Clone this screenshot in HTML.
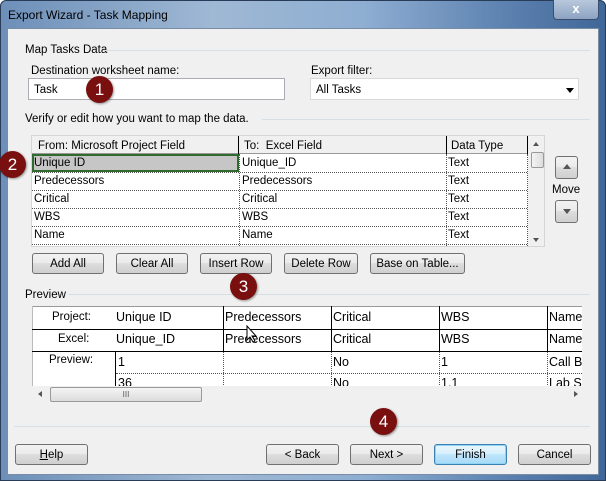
<!DOCTYPE html>
<html><head><style>
*{box-sizing:border-box;margin:0;padding:0}
body{width:606px;height:481px;overflow:hidden;font-family:"Liberation Sans",sans-serif;font-size:11.5px;color:#000;background:#fff}
.a{position:absolute}
.frame{left:0;top:0;width:606px;height:481px;background:linear-gradient(90deg,#6d8fb8 0%,#9fb8d4 35%,#8eaed2 60%,#5a7fae 85%,#3f6797 100%);border:1px solid #283c58;border-radius:6px 6px 0 0}
.client{left:7px;top:28px;width:592px;height:447px;background:#f0f0f0;border:1px solid #7a8da6}
.btn{position:absolute;height:21px;border:1px solid #707070;border-radius:3px;background:linear-gradient(#f2f2f2 0%,#ebebeb 45%,#dddddd 50%,#cfcfcf 100%);text-align:center;line-height:20px;font-size:11.5px}
.circ{position:absolute;width:27px;height:27px;border-radius:50%;background:#7a0f0f;color:#fff;font-size:17px;text-align:center;line-height:27px;box-shadow:1px 1px 2px rgba(0,0,0,.4)}
.grp{position:absolute;height:1px;background:#d5dfe5}
.cell{position:absolute;white-space:nowrap;overflow:hidden}
.hl{position:absolute;height:0;border-top:1px dotted #555}
.vl{position:absolute;width:0;border-left:1px dotted #555}
</style></head><body>
<div class="a frame"></div>
<div class="a" style="left:8px;top:8px;font-size:12px">Export Wizard - Task Mapping</div>
<div class="a" style="left:553px;top:0;width:46px;height:20px;border:1px solid #3a4f6d;border-top:none;border-radius:0 0 4px 4px;background:linear-gradient(#b8c8dc,#8ca3c2);color:#fff;text-align:center;font-weight:bold;font-size:13px;line-height:18px">x</div>
<div class="a client"></div>

<div class="a" style="left:25px;top:44px">Map Tasks Data</div>
<div class="grp" style="left:104px;top:50px;width:486px"></div>
<div class="a" style="left:31px;top:65px">Destination worksheet name:</div>
<div class="a" style="left:28px;top:78px;width:257px;height:22px;border:1px solid #abadb3;background:#fff;padding:5px 5px">Task</div>
<div class="a" style="left:311px;top:65px">Export filter:</div>
<div class="a" style="left:310px;top:78px;width:269px;height:22px;border:1px solid #d9d9d9;background:#fff;padding:5px 5px">All Tasks</div>
<div class="a" style="left:566px;top:88px;width:0;height:0;border-left:4px solid transparent;border-right:4px solid transparent;border-top:5px solid #000"></div>
<div class="a" style="left:25px;top:113px">Verify or edit how you want to map the data.</div>
<div class="grp" style="left:262px;top:119px;width:328px"></div>

<div class="a" style="left:31px;top:135px;width:514px;height:112px;background:#fff;border:1px solid #d5d5d5;overflow:hidden">
 <div class="cell" style="left:0;top:0;width:495px;height:18px;background:#f0f0f0;border-bottom:1px solid #999"></div>
 <div class="cell" style="left:6px;top:4px">From: Microsoft Project Field</div>
 <div class="cell" style="left:212px;top:4px">To:&nbsp; Excel Field</div>
 <div class="cell" style="left:419px;top:4px">Data Type</div>
 <div class="a" style="left:206px;top:0;width:1px;height:18px;background:#000"></div>
 <div class="a" style="left:414px;top:0;width:1px;height:18px;background:#000"></div>
 <div class="a" style="left:495px;top:0;width:1px;height:18px;background:#000"></div>
 <div class="a" style="left:0;top:18px;width:207px;height:18px;background:#c6c6c6;border:2px solid #2f6a2f"></div>
 <div class="hl" style="left:0;top:36px;width:495px"></div>
 <div class="hl" style="left:0;top:54px;width:495px"></div>
 <div class="hl" style="left:0;top:72px;width:495px"></div>
 <div class="hl" style="left:0;top:90px;width:495px"></div>
 <div class="hl" style="left:0;top:108px;width:495px"></div>
 <div class="vl" style="left:207px;top:18px;height:94px"></div>
 <div class="vl" style="left:414px;top:18px;height:94px"></div>
 <div class="vl" style="left:495px;top:18px;height:94px"></div>
 <div class="cell" style="left:2px;top:21px">Unique ID</div><div class="cell" style="left:210px;top:21px">Unique_ID</div><div class="cell" style="left:416px;top:21px">Text</div>
 <div class="cell" style="left:2px;top:39px">Predecessors</div><div class="cell" style="left:210px;top:39px">Predecessors</div><div class="cell" style="left:416px;top:39px">Text</div>
 <div class="cell" style="left:2px;top:57px">Critical</div><div class="cell" style="left:210px;top:57px">Critical</div><div class="cell" style="left:416px;top:57px">Text</div>
 <div class="cell" style="left:2px;top:75px">WBS</div><div class="cell" style="left:210px;top:75px">WBS</div><div class="cell" style="left:416px;top:75px">Text</div>
 <div class="cell" style="left:2px;top:93px">Name</div><div class="cell" style="left:210px;top:93px">Name</div><div class="cell" style="left:416px;top:93px">Text</div>
 <div class="a" style="left:496px;top:0;width:17px;height:111px;background:#f0f0f0"></div>
 <div class="a" style="left:501px;top:6px;border-left:3px solid transparent;border-right:3px solid transparent;border-bottom:4px solid #555"></div>
 <div class="a" style="left:499px;top:16px;width:13px;height:16px;border:1px solid #999;border-radius:2px;background:linear-gradient(90deg,#f4f4f4,#dcdcdc)"></div>
 <div class="a" style="left:501px;top:102px;border-left:3px solid transparent;border-right:3px solid transparent;border-top:4px solid #555"></div>
</div>
<div class="btn" style="left:555px;top:156px;width:23px;height:23px"></div>
<div class="a" style="left:563px;top:164px;border-left:4px solid transparent;border-right:4px solid transparent;border-bottom:5px solid #555"></div>
<div class="a" style="left:552px;top:184px">Move</div>
<div class="btn" style="left:555px;top:200px;width:23px;height:23px"></div>
<div class="a" style="left:563px;top:209px;border-left:4px solid transparent;border-right:4px solid transparent;border-top:5px solid #555"></div>

<div class="btn" style="left:32px;top:253px;width:72px">Add All</div>
<div class="btn" style="left:116px;top:253px;width:72px">Clear All</div>
<div class="btn" style="left:200px;top:253px;width:72px">Insert Row</div>
<div class="btn" style="left:284px;top:253px;width:74px">Delete Row</div>
<div class="btn" style="left:370px;top:253px;width:95px">Base on Table...</div>

<div class="a" style="left:25px;top:289px">Preview</div>
<div class="grp" style="left:68px;top:294px;width:522px"></div>

<div class="a" style="left:32px;top:306px;width:550px;height:96px;background:#fff;overflow:hidden">
 <div class="a" style="left:0;top:0;width:550px;height:1px;background:#999"></div>
 <div class="a" style="left:0;top:0;width:1px;height:96px;background:#bbb"></div>
 <div class="a" style="left:0;top:23px;width:550px;height:1px;background:#000"></div>
 <div class="a" style="left:0;top:45px;width:550px;height:1px;background:#000"></div>
 <div class="a" style="left:83px;top:45px;width:1px;height:35px;background:#000"></div>
 <div class="a" style="left:191px;top:0;width:1px;height:46px;background:#000"></div>
 <div class="a" style="left:299px;top:0;width:1px;height:46px;background:#000"></div>
 <div class="a" style="left:407px;top:0;width:1px;height:46px;background:#000"></div>
 <div class="a" style="left:515px;top:0;width:1px;height:46px;background:#000"></div>
 <div class="vl" style="left:191px;top:46px;height:35px"></div>
 <div class="vl" style="left:299px;top:46px;height:35px"></div>
 <div class="vl" style="left:407px;top:46px;height:35px"></div>
 <div class="vl" style="left:515px;top:46px;height:35px"></div>
 <div class="hl" style="left:84px;top:67px;width:466px"></div>
 <div class="cell" style="left:20px;top:5px">Project:</div>
 <div class="cell" style="left:26px;top:27px">Excel:</div>
 <div class="cell" style="left:17px;top:48px">Preview:</div>
 <div class="cell" style="left:84px;top:4px;font-size:12.5px">Unique ID</div>
 <div class="cell" style="left:84px;top:26px;font-size:12.5px">Unique_ID</div>
 <div class="cell" style="left:193px;top:4px;font-size:12.5px">Predecessors</div>
 <div class="cell" style="left:193px;top:26px;font-size:12.5px">Predecessors</div>
 <div class="cell" style="left:301px;top:4px;font-size:12.5px">Critical</div>
 <div class="cell" style="left:301px;top:26px;font-size:12.5px">Critical</div>
 <div class="cell" style="left:409px;top:4px;font-size:12.5px">WBS</div>
 <div class="cell" style="left:409px;top:26px;font-size:12.5px">WBS</div>
 <div class="cell" style="left:517px;top:4px;font-size:12.5px">Name</div>
 <div class="cell" style="left:517px;top:26px;font-size:12.5px">Name</div>
 <div class="cell" style="left:86px;top:49px;font-size:12.5px">1</div>
 <div class="cell" style="left:301px;top:49px;font-size:12.5px">No</div>
 <div class="cell" style="left:409px;top:49px;font-size:12.5px">1</div>
 <div class="cell" style="left:517px;top:49px;font-size:12.5px">Call B</div>
 <div class="cell" style="left:86px;top:70px;font-size:12.5px">36</div>
 <div class="cell" style="left:301px;top:70px;font-size:12.5px">No</div>
 <div class="cell" style="left:409px;top:70px;font-size:12.5px">1.1</div>
 <div class="cell" style="left:517px;top:70px;font-size:12.5px">Lab S</div>
 <div class="a" style="left:0;top:80px;width:550px;height:16px;background:#f0f0f0"></div>
 <div class="a" style="left:6px;top:85px;border-top:3px solid transparent;border-bottom:3px solid transparent;border-right:4px solid #555"></div>
 <div class="a" style="left:18px;top:81px;width:152px;height:15px;border:1px solid #999;border-radius:2px;background:linear-gradient(#f4f4f4,#dcdcdc);text-align:center;font-size:8px;line-height:13px;color:#555">III</div>
 <div class="a" style="left:542px;top:85px;border-top:3px solid transparent;border-bottom:3px solid transparent;border-left:4px solid #555"></div>
</div>
<svg class="a" style="left:246px;top:325px" width="12" height="18"><path d="M1 1 L1 15 L4 12 L7 17 L9 16 L6 11 L10 11 Z" fill="#fff" stroke="#000" stroke-width="1"/></svg>

<div class="grp" style="left:14px;top:426px;width:576px"></div>
<div class="btn" style="left:15px;top:444px;width:73px"><u>H</u>elp</div>
<div class="btn" style="left:266px;top:444px;width:73px">&lt; Back</div>
<div class="btn" style="left:350px;top:444px;width:73px">Next &gt;</div>
<div class="btn" style="left:434px;top:444px;width:73px;border-color:#3c7fb1;box-shadow:inset 0 0 0 1px #8ed4f5;background:linear-gradient(#eaf6fd,#d9f0fc 45%,#bee6fd 50%,#a7d9f5)">Finish</div>
<div class="btn" style="left:518px;top:444px;width:73px">Cancel</div>

<div class="circ" style="left:86px;top:76px">1</div>
<div class="circ" style="left:-1px;top:151px">2</div>
<div class="circ" style="left:230px;top:273px">3</div>
<div class="circ" style="left:370px;top:408px">4</div>
</body></html>
